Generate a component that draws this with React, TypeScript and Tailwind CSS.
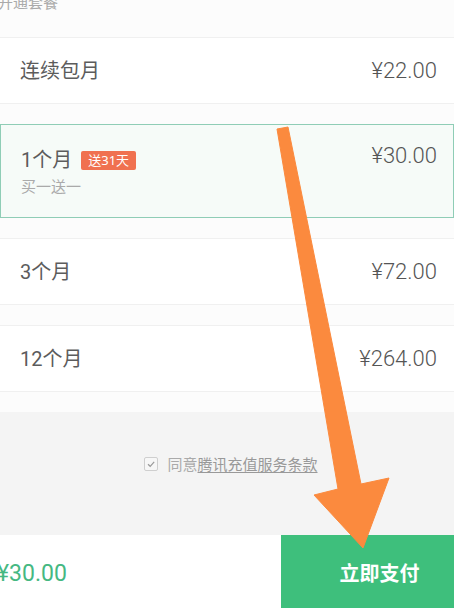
import React from "react";

const font = { fontFamily: '"Noto Sans", "Noto Sans CJK SC", sans-serif' };
const numFont = { fontFamily: 'Roboto, "Noto Sans CJK SC", sans-serif' };

function Row({ label, price }: { label: string; price: string }) {
  return (
    <div className="flex h-[67px] items-center justify-between border-y border-[#f0f0f0] bg-white pl-5 pr-[17px]">
      <span className="text-[20px] text-[#5c5c5c]" style={numFont}>{label}</span>
      <span className="text-[22px] font-light text-[#555]" style={numFont}>{price}</span>
    </div>
  );
}

export default function App() {
  return (
    <div
      className="relative h-[608px] w-[454px] overflow-hidden bg-[#fcfcfc]"
      style={font}
    >
      <div className="flex h-[37px] flex-col">
        <span className="-mt-[9px] -ml-[2px] text-[15px] leading-[22px] text-[#aaa]">开通套餐</span>
      </div>
      <Row label="连续包月" price="¥22.00" />
      <div className="h-[20px]" />
      <div className="flex h-[94px] items-start justify-between border-[1.5px] border-[#8fcdb6] bg-[#f6fbf8] pl-5 pr-[16px] pt-[19px]">
        <div className="flex flex-col">
          <div className="flex items-center gap-[9px]">
            <span className="text-[20px] leading-[32px] text-[#5c5c5c]" style={numFont}>1个月</span>
            <span className="rounded-[2px] bg-[#f07150] px-[7px] text-[13px] leading-[19px] text-white">送31天</span>
          </div>
          <span className="text-[15px] leading-[20px] text-[#aaa]">买一送一</span>
        </div>
        <span className="-mt-[4px] text-[22px] font-light leading-[32px] text-[#555]" style={numFont}>¥30.00</span>
      </div>
      <div className="h-[20px]" />
      <Row label="3个月" price="¥72.00" />
      <div className="h-[20px]" />
      <Row label="12个月" price="¥264.00" />
      <div className="h-[20px]" />
      <div className="flex h-[123px] items-center justify-center bg-[#f4f4f4] pl-[8px]">
        <div className="flex items-center gap-[9px] pb-[19px]">
          <span className="flex h-[14px] w-[14px] items-center justify-center rounded-[2px] border border-[#cfcfcf] bg-[#f7f7f7]">
            <svg width="10" height="10" viewBox="0 0 10 10" fill="none">
              <path d="M2 5.2 L4.2 7.3 L8.2 2.8" stroke="#9a9a9a" strokeWidth="1.2" />
            </svg>
          </span>
          <span className="text-[15px] text-[#aaa]">
            同意<span className="text-[#999] underline underline-offset-2">腾讯充值服务条款</span>
          </span>
        </div>
      </div>
      <div className="flex h-[73px] bg-white">
        <div className="flex flex-1 items-center pt-[5px]">
          <span className="-ml-[3px] text-[23px] text-[#45b882]" style={numFont}>¥30.00</span>
        </div>
        <div className="flex w-[173px] items-center justify-center bg-[#3ebf7c] pl-[24px] pt-[4px]">
          <span className="text-[20px] font-bold text-white">立即支付</span>
        </div>
      </div>

      <svg
        className="pointer-events-none absolute left-0 top-0"
        width="454"
        height="608"
        viewBox="0 0 454 608"
      >
        <polygon
          points="277,129 288,127 361,484 389,478 363,548 314,495 338,489"
          fill="#fb8a3e"
          stroke="#fb8a3e"
          strokeLinejoin="round"
          strokeWidth="1"
        />
      </svg>
    </div>
  );
}
